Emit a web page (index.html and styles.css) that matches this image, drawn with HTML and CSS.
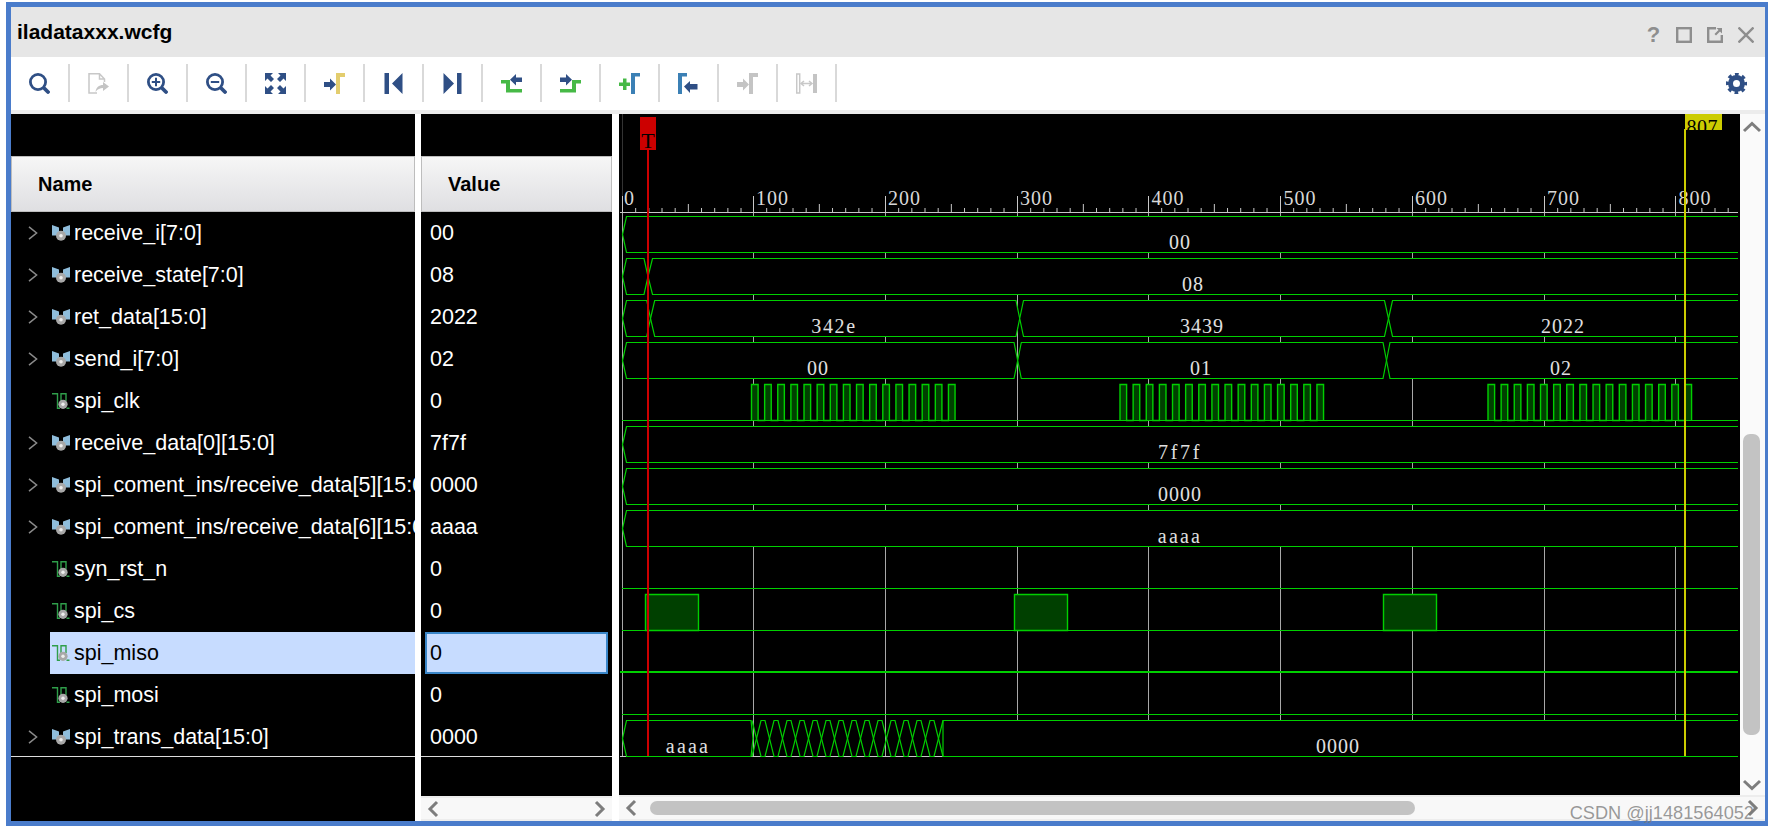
FILE: index.html
```html
<!DOCTYPE html>
<html lang="en">
<head>
<meta charset="utf-8">
<title>iladataxxx.wcfg</title>
<link rel="stylesheet" href="styles.css">
</head>
<body>
<svg class="defs" width="0" height="0" aria-hidden="true">
  <symbol id="i-bus" viewBox="0 0 18 16">
    <path class="bus-l" d="M0 0L7 2.500V10.500H0ZM18 0L11 2.500V10.500H18Z"/>
    <circle class="pin" cx="9" cy="10.800" r="5"/>
    <circle class="pin-dot" cx="9" cy="10.800" r="1.800"/>
  </symbol>
  <symbol id="i-bit" viewBox="0 0 18 16">
    <path class="bit-l" d="M0 .700H5.500V15.300H8M9 8V.700H14V8M14.500 15.300H17.500"/>
    <circle class="pin" cx="11" cy="11.300" r="4.600"/>
    <circle class="pin-dot" cx="11" cy="11.300" r="1.700"/>
  </symbol>
  <symbol id="i-twist" viewBox="0 0 10 14">
    <path class="twist-l" d="M1 .8L8.6 7L1 13.2"/>
  </symbol>
</svg>

<div class="frame">
  <header class="titlebar">
    <h1 class="title">iladataxxx.wcfg</h1>
    <div class="winbtns">
      <span class="help">?</span>
      <svg class="winicon" viewBox="0 0 16 16"><rect class="win-s" x="1.2" y="1.2" width="13.6" height="13.6"/></svg>
      <svg class="winicon" viewBox="0 0 16 16"><path class="win-s" d="M9 1.2H1.2V14.8H14.8V8"/><path class="win-f" d="M9.5 1H15V6.5L13 4.5L9 8.5L7.5 7L11.5 3Z"/></svg>
      <svg class="winicon" viewBox="0 0 16 16"><path class="win-s" d="M.5.5L15.5 15.5M15.5.5L.5 15.5"/></svg>
    </div>
  </header>

  <nav class="toolbar">
    <div class="tool"><svg class="ic" viewBox="0 0 21 21"><circle class="lens" cx="9" cy="9" r="7.600"/><path class="handle" d="M15.500 15.500L19 19"/></svg></div>
    <div class="tool"><svg class="ic" viewBox="0 0 21 21"><path class="page" d="M9 20H1V.8H11.5L16.5 6V9M11.5 1V6H16.5"/><path class="off" d="M7.5 19C8 14.500 11 12 15 12V9L21 13.500L15 18V15C12 15 9.500 16 7.500 19Z"/></svg></div>
    <div class="tool"><svg class="ic" viewBox="0 0 21 21"><circle class="lens" cx="9" cy="9" r="7.600"/><path class="handle" d="M15.500 15.500L19 19"/><path class="cross" d="M4.800 9H13.200M9 4.800V13.200"/></svg></div>
    <div class="tool"><svg class="ic" viewBox="0 0 21 21"><circle class="lens" cx="9" cy="9" r="7.600"/><path class="handle" d="M15.500 15.500L19 19"/><path class="cross" d="M4.800 9H13.200"/></svg></div>
    <div class="tool"><svg class="ic" viewBox="0 0 21 21"><path class="navy" d="M0 0H8L5.500 2.500L9 6L6 9L2.500 5.500L0 8ZM21 0H13L15.500 2.500L12 6L15 9L18.500 5.500L21 8ZM0 21H8L5.500 18.500L9 15L6 12L2.500 15.500L0 13ZM21 21H13L15.500 18.500L12 15L15 12L18.500 15.500L21 13Z"/></svg></div>
    <div class="tool"><svg class="ic" viewBox="0 0 21 21"><path class="navy" d="M0 9H6V5.500L12 11.500L6 17.500V14H0Z"/><path class="gold" d="M12 0H21V4H16V21H12Z"/></svg></div>
    <div class="tool"><svg class="ic" viewBox="0 0 21 21"><path class="navy" d="M1.500 0H6V21H1.500ZM19.500 0V21L9 10.500Z"/></svg></div>
    <div class="tool"><svg class="ic" viewBox="0 0 21 21"><path class="navy" d="M19.500 0H15V21H19.500ZM1.500 0V21L12 10.500Z"/></svg></div>
    <div class="tool"><svg class="ic" viewBox="0 0 21 21"><path class="green" d="M0 7H9V16H21V19.500H5V10.500H0Z"/><path class="navy" d="M9 6.700L15 1V4.500H21V9H15V12.500Z"/></svg></div>
    <div class="tool"><svg class="ic" viewBox="0 0 21 21"><path class="green" d="M0 16H12V7H21V10.500H16V19.500H0Z"/><path class="navy" d="M0 4.500H6V1L12 6.700L6 12.500V9H0Z"/></svg></div>
    <div class="tool"><svg class="ic" viewBox="0 0 21 21"><path class="green" d="M0 9.500H4V5.500H7.500V9.500H11V13H7.500V17H4V13H0Z"/><path class="steel" d="M12 0H21V3.500H16V21H12Z"/></svg></div>
    <div class="tool"><svg class="ic" viewBox="0 0 21 21"><path class="steel" d="M0 0H9V3.500H4V21H0Z"/><path class="navy" d="M6 13.500L12 8V11H19.500V16.500H12V20Z"/></svg></div>
    <div class="tool"><svg class="ic" viewBox="0 0 21 21"><path class="off" d="M0 9H6V5.500L12 11.500L6 17.500V14H0Z"/><path class="off" d="M12 0H21V4H16V21H12Z"/></svg></div>
    <div class="tool"><svg class="ic" viewBox="0 0 21 21"><rect class="page" x=".7" y="1" width="3" height="19"/><path class="off" d="M17 1H21V20H17Z"/><path class="page" d="M5 10.500H16M8 8L5 10.500L8 13M13 8L16 10.500L13 13"/></svg></div>
    <div class="tool-fill"></div>
    <svg class="gear" viewBox="0 0 21 21"><circle class="gear-ring" cx="10.500" cy="10.500" r="6"/><circle class="gear-teeth" cx="10.500" cy="10.500" r="9"/></svg>
  </nav>

  <main class="panes">
    <section class="names">
      <div class="blank"></div>
      <div class="th th-name">Name</div>
      <div class="row"><span class="twist"><svg class="tw"><use href="#i-twist"/></svg></span><span class="cell"><svg class="sig"><use href="#i-bus"/></svg><span class="lbl">receive_i[7:0]</span></span></div>
      <div class="row"><span class="twist"><svg class="tw"><use href="#i-twist"/></svg></span><span class="cell"><svg class="sig"><use href="#i-bus"/></svg><span class="lbl">receive_state[7:0]</span></span></div>
      <div class="row"><span class="twist"><svg class="tw"><use href="#i-twist"/></svg></span><span class="cell"><svg class="sig"><use href="#i-bus"/></svg><span class="lbl">ret_data[15:0]</span></span></div>
      <div class="row"><span class="twist"><svg class="tw"><use href="#i-twist"/></svg></span><span class="cell"><svg class="sig"><use href="#i-bus"/></svg><span class="lbl">send_i[7:0]</span></span></div>
      <div class="row"><span class="twist"></span><span class="cell"><svg class="sig"><use href="#i-bit"/></svg><span class="lbl">spi_clk</span></span></div>
      <div class="row"><span class="twist"><svg class="tw"><use href="#i-twist"/></svg></span><span class="cell"><svg class="sig"><use href="#i-bus"/></svg><span class="lbl">receive_data[0][15:0]</span></span></div>
      <div class="row"><span class="twist"><svg class="tw"><use href="#i-twist"/></svg></span><span class="cell"><svg class="sig"><use href="#i-bus"/></svg><span class="lbl">spi_coment_ins/receive_data[5][15:0]</span></span></div>
      <div class="row"><span class="twist"><svg class="tw"><use href="#i-twist"/></svg></span><span class="cell"><svg class="sig"><use href="#i-bus"/></svg><span class="lbl">spi_coment_ins/receive_data[6][15:0]</span></span></div>
      <div class="row"><span class="twist"></span><span class="cell"><svg class="sig"><use href="#i-bit"/></svg><span class="lbl">syn_rst_n</span></span></div>
      <div class="row"><span class="twist"></span><span class="cell"><svg class="sig"><use href="#i-bit"/></svg><span class="lbl">spi_cs</span></span></div>
      <div class="row"><span class="twist"></span><span class="cell selected"><svg class="sig"><use href="#i-bit"/></svg><span class="lbl">spi_miso</span></span></div>
      <div class="row"><span class="twist"></span><span class="cell"><svg class="sig"><use href="#i-bit"/></svg><span class="lbl">spi_mosi</span></span></div>
      <div class="row"><span class="twist"><svg class="tw"><use href="#i-twist"/></svg></span><span class="cell"><svg class="sig"><use href="#i-bus"/></svg><span class="lbl">spi_trans_data[15:0]</span></span></div>
      <div class="foot"></div>
    </section>

    <section class="values">
      <div class="blank"></div>
      <div class="th th-value">Value</div>
      <div class="val">00</div>
      <div class="val">08</div>
      <div class="val">2022</div>
      <div class="val">02</div>
      <div class="val">0</div>
      <div class="val">7f7f</div>
      <div class="val">0000</div>
      <div class="val">aaaa</div>
      <div class="val">0</div>
      <div class="val">0</div>
      <div class="val val-selected">0</div>
      <div class="val">0</div>
      <div class="val">0000</div>
      <div class="foot"></div>
      <div class="hscroll hscroll-value">
        <svg class="hchev" viewBox="0 0 12 18"><path class="chev" d="M10 2L3 9L10 16"/></svg>
        <svg class="hchev" viewBox="0 0 12 18"><path class="chev" d="M2 2L9 9L2 16"/></svg>
      </div>
    </section>

    <section class="wavecol">
      <div class="wavetop">
        <svg class="wave" viewBox="619 114 1121 681">
          <defs>
            <clipPath id="wclip"><rect x="619" y="114" width="1119" height="681"/></clipPath>
            <clipPath id="fclip"><rect x="1685" y="114" width="37" height="16"/></clipPath>
            <g id="ticks">
              <path d="M0 196V212M13.170 208V212M26.340 208V212M39.510 208V212M52.680 208V212M65.850 204V212M79.020 208V212M92.190 208V212M105.360 208V212M118.530 208V212"/>
            </g>
            <path id="burst" d="M0 420v-36h6.600v36h6.530v-36h6.600v36h6.530v-36h6.600v36h6.530v-36h6.600v36h6.530v-36h6.600v36h6.530v-36h6.600v36h6.530v-36h6.600v36h6.530v-36h6.600v36h6.530v-36h6.600v36h6.530v-36h6.600v36h6.530v-36h6.600v36h6.530v-36h6.600v36h6.530v-36h6.600v36h6.530v-36h6.600v36h6.530v-36h6.600v36h6.530v-36h6.600v36"/>
          </defs>
          <g clip-path="url(#wclip)">
            <path class="dimline" d="M622.500 114V196"/>
            <path class="grid" d="M622.500 196V756M753.500 196V756M885.500 196V756M1017.500 196V756M1148.500 196V756M1280.500 196V756M1412.500 196V756M1544.500 196V756M1675.500 196V756"/>
            <path class="rule" d="M620 212.500H1750M620 756.500H1750"/>
            <g class="ticks">
              <use href="#ticks" x="622.500"/><use href="#ticks" x="753.500"/><use href="#ticks" x="885.500"/><use href="#ticks" x="1017.500"/><use href="#ticks" x="1148.500"/><use href="#ticks" x="1280.500"/><use href="#ticks" x="1412.500"/><use href="#ticks" x="1544.500"/><use href="#ticks" x="1675.500"/>
            </g>
            <g class="ruler-text">
              <text x="624" y="205">0</text><text x="756" y="205">100</text><text x="888" y="205">200</text><text x="1020" y="205">300</text><text x="1151.500" y="205">400</text><text x="1283.500" y="205">500</text><text x="1415" y="205">600</text><text x="1547" y="205">700</text><text x="1678.500" y="205">800</text>
            </g>

            <g transform="translate(0 .5)">
              <g class="bus">
                <path d="M622.500 234L626.500 216H1750V252H626.500Z"/>
                <path d="M622.500 276L626.500 258H644L648 276L644 294H626.500Z"/>
                <path d="M648 276L652.500 258H1750V294H652.500Z"/>
                <path d="M622.500 318L626.500 300H646.700L650.500 318L646.700 336H626.500Z"/>
                <path d="M650.500 318L654.700 300H1016L1019.700 318L1016 336H654.700Z"/>
                <path d="M1019.700 318L1023.500 300H1384.500L1388.500 318L1384.500 336H1023.500Z"/>
                <path d="M1388.500 318L1392.500 300H1750V336H1392.500Z"/>
                <path d="M622.500 360L626.500 342H1014L1017.700 360L1014 378H626.500Z"/>
                <path d="M1017.700 360L1021.300 342H1383L1386.500 360L1383 378H1021.300Z"/>
                <path d="M1386.500 360L1390 342H1750V378H1390Z"/>
                <path d="M622.500 444L626.500 426H1750V462H626.500Z"/>
                <path d="M622.500 486L626.500 468H1750V504H626.500Z"/>
                <path d="M622.500 528L626.500 510H1750V546H626.500Z"/>
                <path d="M622.500 738L626.500 720H751L753 738L751 756H626.500Z"/>
                <path d="M943 720H1750V756H943Z"/>
              </g>

              <g class="pulse">
                <use href="#burst" x="751.500"/><use href="#burst" x="1120"/><use href="#burst" x="1488"/>
                <path d="M645.500 630V594H698.500V630Z"/>
                <path d="M1014.500 630V594H1067.500V630Z"/>
                <path d="M1383.500 630V594H1436.500V630Z"/>
              </g>
              <path class="line" d="M622 420H1750M622 588H1750M622 630H1750M622 714H1750"/>
              <path class="line-thick" d="M620 671.500H1750"/>
              <path class="line" d="M752 720l9 36h4l9-36h4l9 36h4l9-36h4l9 36h4l9-36h4l9 36h4l9-36h4l9 36h4l9-36h4l9 36h4l9-36h4l9 36h4l9-36h4l9 36"/>
              <path class="line" d="M752 756l9-36h4l9 36h4l9-36h4l9 36h4l9-36h4l9 36h4l9-36h4l9 36h4l9-36h4l9 36h4l9-36h4l9 36h4l9-36h4l9 36h4l9-36"/>
            </g>

            <g class="vals">
              <text x="1180" y="249">00</text>
              <text x="1193" y="291">08</text>
              <text class="mid" x="834" y="333">342e</text>
              <text x="1202" y="333">3439</text>
              <text x="1563" y="333">2022</text>
              <text x="818" y="375">00</text>
              <text x="1201" y="375">01</text>
              <text x="1561" y="375">02</text>
              <text class="widest" x="1180" y="459">7f7f</text>
              <text x="1180" y="501">0000</text>
              <text class="wide" x="1180" y="543">aaaa</text>
              <text class="wide" x="688" y="753">aaaa</text>
              <text x="1338" y="753">0000</text>
            </g>

            <rect class="flag-red" x="640" y="117" width="16" height="33"/>
            <text class="flag-text flag-t" x="648" y="148">T</text>
            <path class="cur-red" d="M648 149V756"/>
            <rect class="flag-yellow" x="1685" y="114" width="37" height="16"/>
            <text class="flag-text" x="1686.500" y="134" clip-path="url(#fclip)">807</text>
            <path class="cur-yellow" d="M1685 129V756"/>
          </g>
        </svg>
        <div class="vscroll">
          <svg class="vchev" viewBox="0 0 20 12"><path class="chev" d="M2 10L10 2.500L18 10"/></svg>
          <div class="vtrack"><div class="vthumb"></div></div>
          <svg class="vchev" viewBox="0 0 20 12"><path class="chev" d="M2 2L10 9.500L18 2"/></svg>
        </div>
      </div>
      <div class="hscroll hscroll-wave">
        <svg class="hchev" viewBox="0 0 12 18"><path class="chev" d="M10 2L3 9L10 16"/></svg>
        <div class="htrack"><div class="hthumb"></div></div>
        <svg class="hchev" viewBox="0 0 12 18"><path class="chev" d="M2 2L9 9L2 16"/></svg>
        <span class="watermark">CSDN @jj1481564052</span>
      </div>
    </section>
  </main>
</div>
</body>
</html>
```

FILE: styles.css
```css
* { box-sizing: border-box; }
html, body { margin: 0; padding: 0; height: 831px; overflow: hidden; background: #fff; }
body { font-family: "Liberation Sans", Arial, sans-serif; }
.defs { position: absolute; }

.frame {
  width: 1762px;
  height: 824px;
  margin: 2px 0 0 6px;
  border: solid #4a7ccb;
  border-width: 5px 3px 5px 5px;
  display: flex;
  flex-direction: column;
  background: #fff;
}

/* title bar */
.titlebar {
  height: 50px;
  flex: none;
  background: #e6e6e6;
  display: flex;
  align-items: center;
  justify-content: space-between;
  padding: 0 11px 0 6px;
}
.title { margin: 0; font-size: 21px; font-weight: 700; color: #000; }
.winbtns { display: flex; align-items: center; gap: 15px; padding-top: 6px; }
.help { font-size: 22px; font-weight: 700; color: #8e8e8e; width: 15px; text-align: center; line-height: 16px; }
.winicon { width: 16px; height: 16px; display: block; }
.win-s { fill: none; stroke: #8e8e8e; stroke-width: 2.400; }
.win-f { fill: #8e8e8e; }

/* toolbar */
.toolbar {
  height: 57px;
  flex: none;
  display: flex;
  align-items: center;
  background: #fff;
  border-bottom: 4px solid #ececec;
  padding-bottom: 1px;
}
.tool {
  width: 59px;
  height: 38px;
  flex: none;
  display: flex;
  align-items: center;
  justify-content: center;
  border-right: 2px solid #d9d9d9;
}
.tool-fill { flex: 1; }
.ic { width: 21px; height: 21px; display: block; }
.gear { width: 21px; height: 21px; margin-right: 18px; display: block; }
.lens { fill: none; stroke: #2f4f85; stroke-width: 2.800; }
.handle { fill: none; stroke: #2f4f85; stroke-width: 3.800; stroke-linecap: round; }
.cross { fill: none; stroke: #2f4f85; stroke-width: 2; }
.navy { fill: #2f4f85; }
.gold { fill: #e3cd6e; }
.green { fill: #46b946; }
.steel { fill: #3b80b5; }
.off { fill: #c4c4c4; }
.page { fill: none; stroke: #c8c8c8; stroke-width: 1.500; }
.gear-ring { fill: none; stroke: #2f4f85; stroke-width: 5; }
.gear-teeth { fill: none; stroke: #2f4f85; stroke-width: 3.500; stroke-dasharray: 3.600 3.470; stroke-dashoffset: 1.800; }

/* panes */
.panes { flex: 1; min-height: 0; display: flex; gap: 0; background: #fff; }
.names, .values { display: flex; flex-direction: column; }
.names { width: 404px; flex: none; background: #000; }
.values { width: 191px; flex: none; margin: 0 7px 0 6px; background: #000; }
.blank { height: 42px; flex: none; }
.th {
  height: 56px;
  flex: none;
  display: flex;
  align-items: center;
  font-size: 20px;
  font-weight: 700;
  color: #000;
  border: 1px solid #bdbdbd;
  background: linear-gradient(#f6f6f6, #dfdfe2);
}
.th-name { padding-left: 26px; }
.th-value { padding-left: 26px; }

.row { height: 42px; flex: none; display: flex; }
.twist { width: 39px; flex: none; padding-left: 17px; display: flex; align-items: center; }
.tw { width: 10px; height: 14px; display: block; }
.twist-l { fill: none; stroke: #8a8a8a; stroke-width: 1.500; }
.cell {
  flex: 1;
  min-width: 0;
  overflow: hidden;
  display: flex;
  align-items: center;
  padding-left: 2px;
  gap: 4px;
  font-size: 21.500px;
  color: #fff;
  white-space: nowrap;
}
.cell.selected { background: #c7dcff; color: #000; }
.sig { width: 18px; height: 16px; flex: none; display: block; margin-top: -1px; }
.lbl { flex: none; }
.bus-l { fill: #8fbddb; }
.bit-l { fill: none; stroke: #2f9e4a; stroke-width: 1.400; }
.pin { fill: #a8a8a8; }
.pin-dot { fill: #eee; }

.val {
  height: 42px;
  flex: none;
  display: flex;
  align-items: center;
  padding-left: 9px;
  font-size: 21.500px;
  color: #fff;
}
.val-selected {
  margin: 0 4px;
  padding-left: 3px;
  background: #c7dcff;
  color: #000;
  border: 2px solid #3a86c8;
}
.foot { flex: 1; margin-top: -2px; border-top: 1px solid #ddd; background: #000; }

/* waveform */
.wavecol { flex: 1; min-width: 0; display: flex; flex-direction: column; }
.wavetop { height: 681px; flex: none; display: flex; }
.wave { width: 1121px; height: 681px; flex: none; display: block; background: #000; }
.dimline { stroke: #333; stroke-width: 1; fill: none; }
.grid { stroke: #a8a8a8; stroke-width: 1; fill: none; }
.rule { stroke: #c8c8c8; stroke-width: 1; fill: none; }
.ticks { stroke: #c8c8c8; stroke-width: 1; fill: none; }
.ruler-text text { font-family: "Liberation Serif", serif; font-size: 20px; letter-spacing: 1px; fill: #d8d8d8; }
.bus path { fill: #000; stroke: #00d000; stroke-width: 1.200; }
.pulse use, .pulse path { fill: #004000; stroke: #00d000; stroke-width: 1.400; }
.line { fill: none; stroke: #00d000; stroke-width: 1.200; }
.line-thick { fill: none; stroke: #00d000; stroke-width: 2; }
.vals text { font-family: "Liberation Serif", serif; font-size: 20px; letter-spacing: 1px; fill: #e0e0e0; text-anchor: middle; }
.vals .mid { letter-spacing: 1.600px; }
.vals .wide { letter-spacing: 2.200px; }
.vals .widest { letter-spacing: 2.700px; }
.flag-red { fill: #cc0000; }
.flag-yellow { fill: #cccc00; }
.flag-text { font-family: "Liberation Serif", serif; font-size: 20px; letter-spacing: .5px; fill: #000; }
.flag-t { text-anchor: middle; letter-spacing: 0; font-size: 22px; }
.cur-red { stroke: #cc0000; stroke-width: 2; fill: none; }
.cur-yellow { stroke: #cccc00; stroke-width: 2; fill: none; }

/* scrollbars */
.chev { fill: none; stroke: #7d7d7d; stroke-width: 3; }
.vscroll {
  width: 25px;
  flex: none;
  background: #fafafa;
  display: flex;
  flex-direction: column;
  align-items: center;
  padding: 7px 2px 4px 0;
}
.vchev { width: 20px; height: 12px; flex: none; display: block; }
.vtrack { flex: 1; width: 100%; padding: 301px 3px 0 3px; }
.vthumb { height: 301px; background: #c3c3c3; border-radius: 7px; }
.hscroll {
  flex: 1;
  position: relative;
  display: flex;
  align-items: center;
  justify-content: space-between;
  background: #f8f8f8;
  border-top: 2px solid #ededed;
  border-bottom: 2px solid #ededed;
}
.hscroll-value { height: 25px; flex: none; padding: 0 6px; }
.hscroll-wave { padding: 0 6px; }
.hchev { width: 12px; height: 18px; flex: none; display: block; }
.htrack { flex: 1; padding: 0 332px 0 13px; }
.hthumb { height: 14px; background: #c3c3c3; border-radius: 7px; }
.watermark {
  position: absolute;
  right: 11px;
  top: 6px;
  font-size: 18.200px;
  line-height: 20px;
  color: rgba(120, 120, 120, .75);
  white-space: nowrap;
}
```
